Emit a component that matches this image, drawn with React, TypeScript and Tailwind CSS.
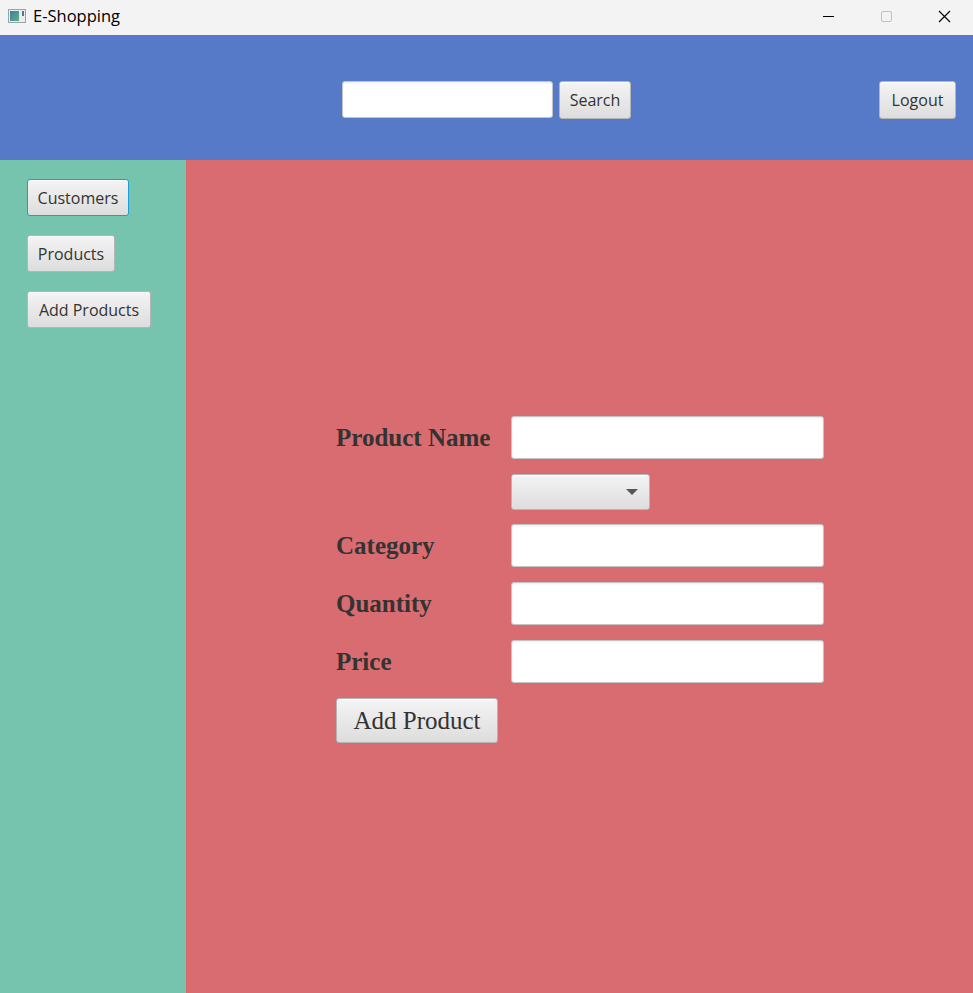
const fxButton =
  "rounded-[3px] border bg-gradient-to-b from-[#f4f4f4] to-[#dddddd] text-[#333333] shadow-[inset_0_1px_0_#ffffff]";

const fxField =
  "rounded-[3px] border border-[#c4c4c4] bg-white shadow-[inset_0_1px_2px_rgba(0,0,0,0.08)] outline-none";

const TitleBar = () => (
  <div className="flex h-[35px] items-center bg-[#f3f3f3] pb-[3px] text-black">
    <div className="ml-[8px] flex h-[14px] w-[18px] items-center border border-[#9aa3a6] bg-[#e8ecec] p-[1px]">
      <div className="h-full w-[9px] bg-gradient-to-br from-[#3d7f9a] to-[#5fae8a]" />
      <div className="ml-auto h-[5px] w-[2px] self-start bg-[#4a7d90]" />
    </div>
    <span className="ml-[7px] font-['Open_Sans',sans-serif] text-[16.5px] leading-none">E-Shopping</span>
    <div className="ml-auto flex h-full items-center">
      <div className="flex h-full w-[58px] items-center justify-center">
        <div className="h-[1px] w-[11px] bg-black" />
      </div>
      <div className="flex h-full w-[58px] items-center justify-center">
        <div className="h-[11px] w-[11px] rounded-[2px] border border-[#c0c0c0]" />
      </div>
      <div className="flex h-full w-[58px] items-center justify-center">
        <svg width="13" height="13" viewBox="0 0 13 13">
          <path d="M1 1L12 12M12 1L1 12" stroke="#000" strokeWidth="1.1" />
        </svg>
      </div>
    </div>
  </div>
);

const Header = () => (
  <div className="flex h-[125px] items-start bg-[#5679c8] pt-[46px] font-['Open_Sans',sans-serif]">
    <div className="ml-[342px] flex items-start gap-[6px]">
      <input className={`${fxField} h-[37px] w-[211px] px-2`} />
      <button className={`${fxButton} h-[38px] w-[72px] border-[#b5b5b5] text-[16px]`}>Search</button>
    </div>
    <button className={`${fxButton} ml-auto mr-[17px] h-[38px] w-[77px] border-[#b5b5b5] text-[16px]`}>
      Logout
    </button>
  </div>
);

const Sidebar = () => (
  <div className="flex w-[186px] flex-col items-start gap-[19px] bg-[#77c4ae] pl-[27px] pt-[19px] font-['Open_Sans',sans-serif]">
    <button className={`${fxButton} h-[37px] w-[102px] border-[#1e9bd7] text-[16px] shadow-[0_0_0_1px_#a9dcf3]`}>
      Customers
    </button>
    <button className={`${fxButton} h-[37px] w-[88px] border-[#b5b5b5] text-[16px]`}>Products</button>
    <button className={`${fxButton} h-[37px] w-[124px] border-[#b5b5b5] text-[16px]`}>Add Products</button>
  </div>
);

const Label = ({ children }: { children: string }) => (
  <div className="w-[175px] text-[25px] font-bold leading-none text-[#333333]">{children}</div>
);

const Row = ({ label }: { label: string }) => (
  <div className="flex items-center">
    <Label>{label}</Label>
    <input className={`${fxField} h-[43px] w-[313px] px-2`} />
  </div>
);

const AddProductForm = () => (
  <div className="flex flex-1 flex-col bg-[#d96c70] pl-[150px] pt-[256px] font-['Liberation_Serif',serif]">
    <div className="flex flex-col gap-[15px]">
      <Row label="Product Name" />
      <div className="-mb-[1px] flex items-center">
        <div className="w-[175px]" />
        <div className={`${fxButton} relative h-[36px] w-[139px] border-[#b5b5b5]`}>
          <div className="absolute right-[11px] top-[14px] h-0 w-0 border-x-[6px] border-t-[6px] border-x-transparent border-t-[#555555]" />
        </div>
      </div>
      <Row label="Category" />
      <Row label="Quantity" />
      <Row label="Price" />
      <div>
        <button className={`${fxButton} h-[45px] w-[162px] border-[#b5b5b5] text-[25px] leading-none`}>
          Add Product
        </button>
      </div>
    </div>
  </div>
);

export default function App() {
  return (
    <div className="flex h-[993px] w-[973px] flex-col overflow-hidden">
      <TitleBar />
      <Header />
      <div className="flex flex-1">
        <Sidebar />
        <AddProductForm />
      </div>
    </div>
  );
}
